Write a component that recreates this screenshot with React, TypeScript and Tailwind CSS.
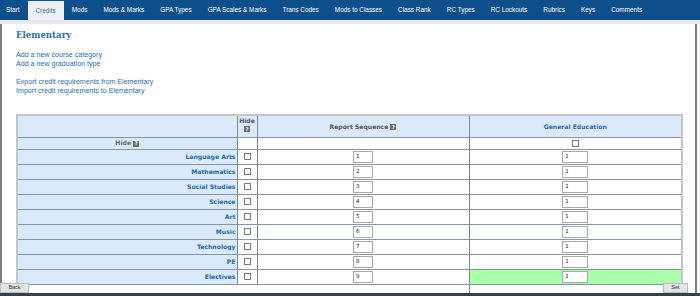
import React from "react";

const tabs = [
  "Start",
  "Credits",
  "Mods",
  "Mods & Marks",
  "GPA Types",
  "GPA Scales & Marks",
  "Trans Codes",
  "Mods to Classes",
  "Class Rank",
  "RC Types",
  "RC Lockouts",
  "Rubrics",
  "Keys",
  "Comments",
];

const subjects = [
  "Language Arts",
  "Mathematics",
  "Social Studies",
  "Science",
  "Art",
  "Music",
  "Technology",
  "PE",
  "Electives",
];

const HelpIcon: React.FC = () => (
  <span className="inline-flex items-center justify-center w-[6px] h-[6px] bg-[#6e6e6e] text-white text-[5px] leading-none font-bold align-middle">
    ?
  </span>
);

const Check: React.FC = () => (
  <span className="inline-block w-[7px] h-[7px] border border-[#7a7a7a] bg-white align-middle" />
);

const NumBox: React.FC<{ value: string; wide?: boolean }> = ({ value, wide }) => (
  <span
    className={`inline-flex items-center h-[12px] border border-[#a9a9a9] bg-white pl-[2px] text-[5.5px] font-normal text-[#222] align-middle ${
      wide ? "w-[26px]" : "w-[20px]"
    }`}
  >
    {value}
  </span>
);

export default function App() {
  return (
    <div className="relative w-[700px] h-[296px] overflow-hidden bg-white font-['Liberation_Sans',Arial,sans-serif]">
      {/* tab strip */}
      <nav className="h-[20px] bg-[#0d4f8b] flex items-stretch -ml-[2px]">
        {tabs.map((t) => (
          <div
            key={t}
            className={`px-[8px] flex items-center text-[6.4px] whitespace-nowrap ${
              t === "Credits"
                ? "bg-[#eef1f4] text-[#3d74ad] mt-[1px]"
                : "text-white"
            }`}
          >
            {t}
          </div>
        ))}
      </nav>
      <div className="h-[4px] bg-[#e8ebee]" />

      {/* content panel */}
      <div className="h-[269px] border-l-2 border-r-2 border-[#7d7d7d] mr-[3px] overflow-hidden pl-[14px] pr-[14px] pt-[5px]">
        <h1 className="font-['DejaVu_Serif',serif] font-bold text-[8.6px] leading-[12px] text-[#2b6fb2]">
          Elementary
        </h1>
        <div className="mt-[10px] text-[7.1px] leading-[9px] text-[#2a6cb0]">
          <div>Add a new course category</div>
          <div>Add a new graduation type</div>
        </div>
        <div className="mt-[9px] text-[7.1px] leading-[9px] text-[#2a6cb0]">
          <div>Export credit requirements from Elementary</div>
          <div>Import credit requirements to Elementary</div>
        </div>

        <table className="mt-[18px] w-[665px] table-fixed border-collapse border-t-2 border-l-2 border-r-2 border-[#c4c7ca] font-['DejaVu_Sans',Verdana,sans-serif] text-[6.1px] font-bold">
          <colgroup>
            <col className="w-[220px]" />
            <col className="w-[20px]" />
            <col className="w-[212px]" />
            <col className="w-[213px]" />
          </colgroup>
          <tbody>
            <tr className="h-[22px] bg-[#dbeafb] border-b border-[#8796a6]">
              <td className="border-r border-[#7f8891]" />
              <td className="border-r border-[#7f8891] text-center align-top text-[#555] pt-[1px] leading-[8px]">
                Hide
                <div className="leading-[7px]">
                  <HelpIcon />
                </div>
              </td>
              <td className="border-r border-[#7f8891] text-center text-[#555]">
                Report Sequence <HelpIcon />
              </td>
              <td className="text-center text-[#2a6cb0]">General Education</td>
            </tr>
            <tr className="h-[12px] border-b border-[#8796a6]">
              <td className="bg-[#dbeafb] border-r border-[#7f8891] text-center text-[#666]">
                Hide <HelpIcon />
              </td>
              <td className="border-r border-[#7f8891]" />
              <td className="border-r border-[#7f8891]" />
              <td className="text-center leading-none">
                <Check />
              </td>
            </tr>
            {subjects.map((s, i) => (
              <tr key={s} className="h-[15px] border-b border-[#8796a6]">
                <td className="bg-[#dbeafb] border-r border-[#7f8891] text-right pr-[1px] text-[#2368b0]">
                  {s}
                </td>
                <td className="border-r border-[#7f8891] text-center leading-none">
                  <Check />
                </td>
                <td className="border-r border-[#7f8891] text-center leading-none">
                  <NumBox value={String(i + 1)} />
                </td>
                <td
                  className={`text-center leading-none ${
                    s === "Electives" ? "bg-[#aaffaa]" : ""
                  }`}
                >
                  <NumBox value="1" wide />
                </td>
              </tr>
            ))}
            <tr className="h-[15px]">
              <td colSpan={2} />
              <td className="border-r border-[#7f8891]" />
              <td />
            </tr>
          </tbody>
        </table>
      </div>

      {/* footer bar */}
      <div className="h-[3px] bg-[#36404a]" />

      <button className="absolute left-0 bottom-[3px] w-[29px] h-[10px] bg-[#e4e4e4] border border-[#bdbdbd] text-[5.5px] text-[#333] leading-none">
        Back
      </button>
      <button className="absolute left-[663px] bottom-[3px] w-[25px] h-[10px] bg-[#e4e4e4] border border-[#bdbdbd] text-[5.5px] text-[#333] leading-none">
        Set
      </button>
    </div>
  );
}
